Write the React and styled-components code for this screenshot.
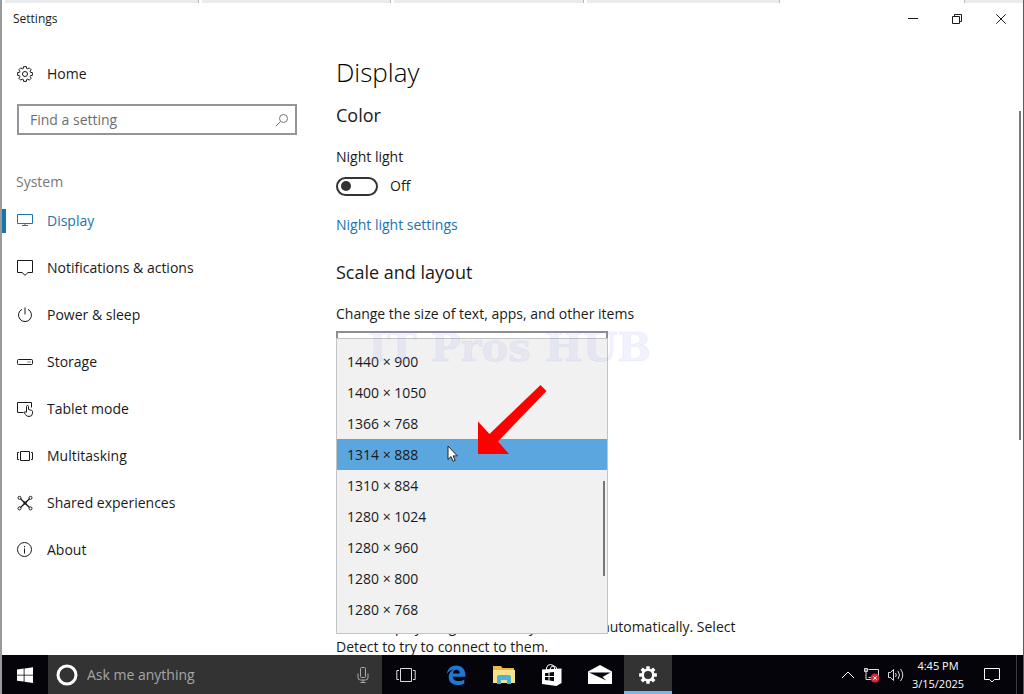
import React, { useState } from 'react';
import styled, { createGlobalStyle } from 'styled-components';

const GlobalStyle = createGlobalStyle`
  * {
    box-sizing: border-box;
  }

  body {
    margin: 0;
    background: #fff;
    color: #1a1a1a;
    font-family: 'Open Sans', 'Noto Sans', sans-serif;
    font-size: 14px;
    line-height: 20px;
  }

  button,
  input,
  select {
    font: inherit;
    color: inherit;
  }
`;

const Screen = styled.div`
  display: flex;
  flex-direction: column;
  height: 100vh;
  overflow: hidden;
  border-left: 2px solid #9a9a9a;
  border-right: 1px solid #5c5c5c;
`;

const TabStrip = styled.div`
  display: flex;
  flex: none;
  height: 3px;
  padding-left: 3px;
  background: #fff;
`;

const Tab = styled.div`
  flex: ${(props) => props.$grow} 1 0;
  background: ${(props) => (props.$active ? '#fff' : '#ebebeb')};
  border-right: ${(props) => (props.$active ? 'none' : '1px solid #b8b8b8')};
  margin-right: ${(props) => (props.$active ? '0' : '3px')};

  &:last-child {
    margin-right: 0;
    border-right: none;
    border-left: 1px solid #b8b8b8;
  }
`;

const TitleBar = styled.header`
  display: flex;
  flex: none;
  align-items: center;
  justify-content: space-between;
  height: 32px;
  padding-left: 11px;
  font-size: 12px;
`;

const WindowButtons = styled.div`
  display: flex;
`;

const WindowButton = styled.button`
  display: flex;
  align-items: center;
  justify-content: center;
  width: 44px;
  height: 32px;
  padding: 0;
  border: none;
  background: none;
`;

const Body = styled.div`
  display: flex;
  flex: 1;
  min-height: 0;
`;

const Sidebar = styled.aside`
  flex: none;
  width: 295px;
  padding-top: 15px;
`;

const NavLink = styled.a`
  display: flex;
  align-items: center;
  height: 47px;
  color: ${(props) => (props.$active ? '#1a74b0' : '#1a1a1a')};
  text-decoration: none;

  &::before {
    content: '';
    width: 4px;
    height: 24px;
    margin-right: 11px;
    background: ${(props) => (props.$active ? '#1a74b0' : 'transparent')};
  }

  svg {
    flex: none;
    margin-right: 14px;
  }
`;

const SearchBox = styled.label`
  display: flex;
  align-items: center;
  height: 31px;
  margin: 7px 0 0 15px;
  padding: 0 6px 0 11px;
  border: 2px solid #959595;
  color: #777;

  input {
    flex: 1;
    min-width: 0;
    padding: 0;
    border: none;
    outline: none;
    background: none;
  }

  input::placeholder {
    color: #6e6e6e;
    opacity: 1;
  }
`;

const GroupName = styled.h2`
  margin: 37px 0 5px 14px;
  color: #777;
  font-size: 14px;
  font-weight: 400;
  line-height: 20px;
`;

const Content = styled.main`
  flex: 1;
  min-width: 0;
  padding: 19px 0 0 39px;
  overflow: hidden;
`;

const PageTitle = styled.h1`
  margin: 0;
  color: #000;
  font-size: 26px;
  font-weight: 350;
  line-height: 36px;
`;

const SectionTitle = styled.h2`
  margin: ${(props) => props.$top}px 0 0;
  font-size: 18px;
  font-weight: 400;
  line-height: 28px;
`;

const FieldLabel = styled.label`
  display: block;
  margin-top: 18px;
`;

const ToggleRow = styled.div`
  display: flex;
  align-items: center;
  gap: 12px;
  margin-top: 9px;
`;

const Toggle = styled.input`
  appearance: none;
  display: flex;
  align-items: center;
  width: 42px;
  height: 19px;
  margin: 0;
  padding: 0 3px;
  border: 2px solid #333;
  border-radius: 10px;

  &::before {
    content: '';
    width: 10px;
    height: 10px;
    border-radius: 50%;
    background: #333;
  }

  &:checked {
    justify-content: flex-end;
  }
`;

const TextLink = styled.a`
  display: block;
  margin-top: 19px;
  color: #1a74b0;
  text-decoration: none;
`;

const Dropdown = styled.div`
  position: relative;
  width: 272px;
  height: 286px;
  margin-top: 7px;
`;

const ScaleSelect = styled.select`
  appearance: none;
  display: block;
  width: 100%;
  height: 32px;
  border: 2px solid #8e8e8e;
  border-radius: 0;
  background: #fff;
`;

const OptionList = styled.ul`
  position: absolute;
  top: 7px;
  left: 0;
  right: 0;
  margin: 0;
  padding: 7px 0 8px;
  border: 1px solid #c4c4c4;
  background: #f1f1f1;
  list-style: none;
`;

const Option = styled.li`
  height: 31px;
  padding-left: 10px;
  background: ${(props) => (props.$selected ? '#5ca6e0' : 'transparent')};
  line-height: 31px;
`;

const ListThumb = styled.div`
  position: absolute;
  top: 142px;
  right: 2px;
  width: 2px;
  height: 95px;
  background: #777;
`;

const Watermark = styled.span`
  position: absolute;
  top: -5px;
  left: 32px;
  color: rgba(150, 155, 240, 0.12);
  font-family: 'DejaVu Serif', serif;
  font-size: 40px;
  font-weight: 700;
  line-height: 42px;
  white-space: nowrap;
  -webkit-text-stroke: 1px rgba(120, 130, 235, 0.1);
  pointer-events: none;
`;

const Arrow = styled.svg`
  position: absolute;
  top: 53px;
  left: 141px;
`;

const Cursor = styled.svg`
  position: absolute;
  top: 114px;
  left: 111px;
`;

const Hint = styled.p`
  max-width: 410px;
  margin: 0;
`;

const PageThumb = styled.div`
  flex: none;
  width: 2px;
  height: 53%;
  margin: 76px 2px 0 0;
  background: #7a7a7a;
`;

const Taskbar = styled.footer`
  display: flex;
  flex: none;
  height: 39px;
  background: #04040a;
  color: #fff;
`;

const TaskButton = styled.button`
  display: flex;
  align-items: center;
  justify-content: center;
  width: ${(props) => props.$width || 48}px;
  padding: 0;
  border: none;
  border-bottom: 3px solid ${(props) => (props.$active ? '#76b9ed' : 'transparent')};
  border-top: 3px solid transparent;
  background: ${(props) => (props.$active ? '#333' : 'none')};
`;

const Apps = styled.div`
  display: flex;
  margin-left: 2px;
`;

const Cortana = styled.label`
  display: flex;
  align-items: center;
  flex: 0 1 334px;
  padding: 0 12px 0 8px;
  background: #333;

  input {
    flex: 1;
    min-width: 0;
    padding: 0 9px;
    border: none;
    outline: none;
    background: none;
  }

  input::placeholder {
    color: #a6a6a6;
    opacity: 1;
  }
`;

const Tray = styled.div`
  display: flex;
  margin-left: auto;
  padding-right: 2px;
`;

const Clock = styled.time`
  display: flex;
  flex-direction: column;
  justify-content: center;
  width: 60px;
  font-size: 11px;
  line-height: 18px;
  text-align: center;
`;

const ShowDesktop = styled.button`
  width: 5px;
  padding: 0;
  border: none;
  border-left: 1px solid #3c3c40;
  background: none;
`;

const Icon = ({ size = 16, width, height, children }) => (
  <svg
    width={width || size}
    height={height || size}
    viewBox={`0 0 ${width || size} ${height || size}`}
    fill='none'
    stroke='currentColor'
    aria-hidden='true'
  >
    {children}
  </svg>
);

// Outline of a cog with eight square teeth
const gearPath = (c, outer, inner) => {
  const points = [];
  for (let i = 0; i < 8; i += 1) {
    [[-0.28, inner], [-0.19, outer], [0.19, outer], [0.28, inner]].forEach(([da, r]) => {
      const a = (i * Math.PI) / 4 + da;
      points.push(`${(c + r * Math.sin(a)).toFixed(2)} ${(c - r * Math.cos(a)).toFixed(2)}`);
    });
  }
  return `M${points.join('L')}Z`;
};

const GearIcon = () => (
  <Icon>
    <path d={gearPath(8, 7.5, 5.8)} />
    <circle cx='8' cy='8' r='2.5' />
  </Icon>
);

const DisplayIcon = () => (
  <Icon>
    <path d='M.5 1.500h15v9H.5zM8 10.500v2M5 12.500h6' />
  </Icon>
);

const NotificationIcon = () => (
  <Icon>
    <path d='M.5.5h15v12h-4.500L8 15.300 5 12.500H.5z' />
  </Icon>
);

const PowerIcon = () => (
  <Icon>
    <path d='M8 .5v7M5 2.300a6.500 6.500 0 1 0 6 0' />
  </Icon>
);

const StorageIcon = () => (
  <Icon>
    <rect x='.5' y='5.500' width='15' height='5' rx='1' />
    <path d='M10.500 8h1M12.500 8h1' />
  </Icon>
);

const TabletIcon = () => (
  <Icon>
    <path d='M6.500 11.500h-6v-10h14v5' />
    <path d='M9.500 11V5.500a1 1 0 0 1 2 0v3l3 .8q1 .3 1 1.300v1.500q0 3.400-3.500 3.400-2.500 0-3.500-1.900L7 11.300q1-1.200 2.500.2' />
  </Icon>
);

const MultitaskIcon = () => (
  <Icon>
    <path d='M3.500 3.500h9v9h-9zM2 4.500H.5v7H2M14 4.500h1.500v7H14' />
  </Icon>
);

const SharedIcon = () => (
  <Icon>
    <path d='M3.500 3.800 12.500 12.500M12.500 3.800 3.500 12.500' strokeWidth='1.300' />
    <path d='M6.500 8h3' strokeWidth='3' />
    <circle cx='2.500' cy='2.800' r='1.500' />
    <circle cx='13.500' cy='2.800' r='1.500' />
    <circle cx='2.500' cy='13.400' r='1.500' />
    <circle cx='13.500' cy='13.400' r='1.500' />
  </Icon>
);

const AboutIcon = () => (
  <Icon>
    <circle cx='7.500' cy='7.500' r='7' />
    <path d='M7.500 6.500v5M7.500 4v1.300' />
  </Icon>
);

const navItems = [
  { label: 'Display', icon: DisplayIcon },
  { label: 'Notifications & actions', icon: NotificationIcon },
  { label: 'Power & sleep', icon: PowerIcon },
  { label: 'Storage', icon: StorageIcon },
  { label: 'Tablet mode', icon: TabletIcon },
  { label: 'Multitasking', icon: MultitaskIcon },
  { label: 'Shared experiences', icon: SharedIcon },
  { label: 'About', icon: AboutIcon },
];

const resolutions = [
  '1440 × 900',
  '1400 × 1050',
  '1366 × 768',
  '1314 × 888',
  '1310 × 884',
  '1280 × 1024',
  '1280 × 960',
  '1280 × 800',
  '1280 × 768',
];

function SettingsSidebar() {
  const [active, setActive] = useState('Display');

  return (
    <Sidebar>
      <NavLink href='#home'>
        <GearIcon />
        Home
      </NavLink>
      <SearchBox>
        <input type='text' placeholder='Find a setting' aria-label='Find a setting' />
        <Icon size={14}>
          <circle cx='8.500' cy='5.500' r='4' />
          <path d='M5.600 8.400.8 13.200' />
        </Icon>
      </SearchBox>
      <GroupName>System</GroupName>
      <nav>
        {navItems.map(({ label, icon: ItemIcon }) => (
          <NavLink
            key={label}
            href='#system'
            $active={label === active}
            onClick={() => setActive(label)}
          >
            <ItemIcon />
            {label}
          </NavLink>
        ))}
      </nav>
    </Sidebar>
  );
}

function DisplayPage() {
  const [nightLight, setNightLight] = useState(false);
  const [resolution, setResolution] = useState('1314 × 888');

  return (
    <Content>
      <PageTitle>Display</PageTitle>
      <SectionTitle $top={11}>Color</SectionTitle>
      <FieldLabel htmlFor='night-light'>Night light</FieldLabel>
      <ToggleRow>
        <Toggle
          id='night-light'
          type='checkbox'
          role='switch'
          checked={nightLight}
          onChange={() => setNightLight(!nightLight)}
        />
        <span>{nightLight ? 'On' : 'Off'}</span>
      </ToggleRow>
      <TextLink href='#night-light'>Night light settings</TextLink>

      <SectionTitle $top={23}>Scale and layout</SectionTitle>
      <FieldLabel htmlFor='scale'>Change the size of text, apps, and other items</FieldLabel>
      <Dropdown>
        <ScaleSelect id='scale' />
        <OptionList role='listbox' aria-label='Resolution'>
          {resolutions.map((item) => (
            <Option
              key={item}
              role='option'
              aria-selected={item === resolution}
              $selected={item === resolution}
              onClick={() => setResolution(item)}
            >
              {item}
            </Option>
          ))}
          <ListThumb />
        </OptionList>
        <Watermark>IT Pros HUB</Watermark>
        <Cursor width='12' height='18' viewBox='0 0 12 18' aria-hidden='true'>
          <path
            d='M1 1v13.500l3-2.900 2.100 4.700 2-.9-2-4.500h4.200z'
            fill='#fff'
            stroke='#222'
          />
        </Cursor>
        <Arrow width='70' height='72' viewBox='0 0 70 72' aria-hidden='true'>
          <path d='M63.500 1 69.500 7 21 57.500 32 70H1V37.500L12.500 50z' fill='#fe0000' />
        </Arrow>
      </Dropdown>
      <Hint>
        Older displays might not always connect automatically. Select Detect to try to connect to
        them.
      </Hint>
    </Content>
  );
}

function SystemTaskbar() {
  return (
    <Taskbar>
      <TaskButton $width={46} aria-label='Start'>
        <Icon>
          <path
            d='M0 2.400 6.700 1.500V7.700H0zM7.500 1.400 16 .2V7.700H7.500zM0 8.500H6.700V14.600L0 13.700zM7.500 8.500H16V16L7.500 14.800z'
            fill='#fff'
            stroke='none'
          />
        </Icon>
      </TaskButton>
      <Cortana>
        <Icon size={22}>
          <circle cx='11' cy='11' r='9' stroke='#fff' strokeWidth='3' />
        </Icon>
        <input type='text' placeholder='Ask me anything' aria-label='Ask me anything' />
        <svg width='14' height='18' viewBox='0 0 14 18' fill='none' stroke='#aaa' aria-hidden='true'>
          <rect x='4.500' y='1.500' width='5' height='10' rx='1' />
          <path d='M2 7.500v4q0 2.500 2.500 2.500h5q2.500 0 2.500-2.500v-4M7 14v3M4.500 16.500h5' />
        </svg>
      </Cortana>
      <TaskButton aria-label='Task View'>
        <Icon width={20} height={16}>
          <path d='M4.500 1.500h11v13h-11zM3 3.500H.8v9H3M17 3.500h2.200v9H17' stroke='#ddd' />
        </Icon>
      </TaskButton>
      <Apps>
        <TaskButton aria-label='Microsoft Edge'>
          <Icon size={20}>
            <path
              d='M.8 9C1.500 3.700 5.200.5 10.200.5c5.800 0 9.200 4 9.200 9.300v2H6.800c.2 3 2.600 4.300 5.700 4.300 2.200 0 4.200-.6 5.800-1.600v4c-1.800 1-4 1.500-6.600 1.500-5.600 0-9-3.200-9-8 0-3.400 1.900-6 5-7.400C4.500 5 2.200 6.500.8 9zM6.900 8.400h6.800c0-2.300-1-3.600-3.200-3.600-2 0-3.300 1.400-3.600 3.600z'
              fill='#1f78d4'
              fillRule='evenodd'
              stroke='none'
            />
          </Icon>
        </TaskButton>
        <TaskButton aria-label='File Explorer'>
          <Icon width={22} height={20}>
            <g stroke='none'>
              <path d='M0 1h8l1.500 2H21v5H0z' fill='#e8b84a' />
              <path d='M0 5h22v13H0z' fill='#fbe08a' />
              <path d='M4 19v-7q0-2 2-2h10q2 0 2 2v7h-4v-4H8v4z' fill='#49b4d6' />
            </g>
          </Icon>
        </TaskButton>
        <TaskButton aria-label='Store'>
          <Icon width={22} height={24}>
            <path d='M5.500 7V5q.5-3.500 4-3.500t4 3.500v2M9 6q1-3.500 4-3t3 4' stroke='#fff' />
            <path d='M1 6.500 20.500 5.500V20L15.500 23 1 21z' fill='#fff' stroke='none' />
            <path
              d='M4 10.200 7.500 9.700v3.400H4zM8.500 9.600 13 9v4.100H8.500zM4 14h3.500v3.400L4 17zM8.500 14H13v4.200l-4.500-.6z'
              fill='#04040a'
              stroke='none'
            />
          </Icon>
        </TaskButton>
        <TaskButton aria-label='Mail'>
          <Icon width={24} height={20}>
            <path d='M0 6.500 12 0 24 6.500V19H0z' fill='#fff' stroke='none' />
            <path d='M1 7.500 22.500 7.500 14.500 12 18.500 15.500z' fill='#04040a' stroke='none' />
          </Icon>
        </TaskButton>
        <TaskButton $active aria-label='Settings'>
          <Icon size={18}>
            <path d={gearPath(9, 9, 6.500)} fill='#fff' stroke='none' />
            <circle cx='9' cy='9' r='4' fill='#333' stroke='none' />
          </Icon>
        </TaskButton>
      </Apps>
      <Tray>
        <TaskButton $width={24} aria-label='Show hidden icons'>
          <Icon width={14} height={8}>
            <path d='M1 7 7 1l6 6' stroke='#fff' />
          </Icon>
        </TaskButton>
        <TaskButton $width={24} aria-label='Network'>
          <Icon width={18} height={16}>
            <path d='M5.500 2.500h10v8h-10M1.500 1.500h3v3h-3zM3 4.500v8M3 12.500h5M1.500 3h3' stroke='#ddd' />
            <circle cx='12' cy='11' r='4.500' fill='#d8283a' stroke='none' />
            <path d='M10.300 9.300l3.400 3.400M13.700 9.300l-3.400 3.400' stroke='#fff' />
          </Icon>
        </TaskButton>
        <TaskButton $width={24} aria-label='Volume'>
          <Icon width={18} height={16}>
            <path
              d='M1.500 5.500h2l3-3v11l-3-3h-2zM8.500 6q1.500 2 0 4M11 4q3 4 0 8M13.500 2q4.500 6 0 12'
              stroke='#ddd'
            />
          </Icon>
        </TaskButton>
        <Clock>
          <span>4:45 PM</span>
          <span>3/15/2025</span>
        </Clock>
        <TaskButton aria-label='Action Center'>
          <Icon width={16} height={16}>
            <path d='M.5 1.500h15v11h-5L8 15l-2.500-2.500h-5z' stroke='#fff' />
          </Icon>
        </TaskButton>
        <ShowDesktop aria-label='Show desktop' />
      </Tray>
    </Taskbar>
  );
}

export default function App() {
  return (
    <Screen>
      <GlobalStyle />
      <TabStrip>
        <Tab $grow={193} />
        <Tab $grow={189} />
        <Tab $grow={189} />
        <Tab $grow={193} />
        <Tab $grow={181} $active />
        <Tab $grow={58} />
      </TabStrip>
      <TitleBar>
        <span>Settings</span>
        <WindowButtons>
          <WindowButton aria-label='Minimize'>
            <Icon size={10}>
              <path d='M0 4.500h10' />
            </Icon>
          </WindowButton>
          <WindowButton aria-label='Restore'>
            <Icon size={10}>
              <path d='M.5 2.500h7v7h-7zM2.500 2.500v-2h7v7h-2' />
            </Icon>
          </WindowButton>
          <WindowButton aria-label='Close'>
            <Icon size={10}>
              <path d='M.3.3l9.400 9.400M9.700.3.3 9.700' />
            </Icon>
          </WindowButton>
        </WindowButtons>
      </TitleBar>
      <Body>
        <SettingsSidebar />
        <DisplayPage />
        <PageThumb />
      </Body>
      <SystemTaskbar />
    </Screen>
  );
}
